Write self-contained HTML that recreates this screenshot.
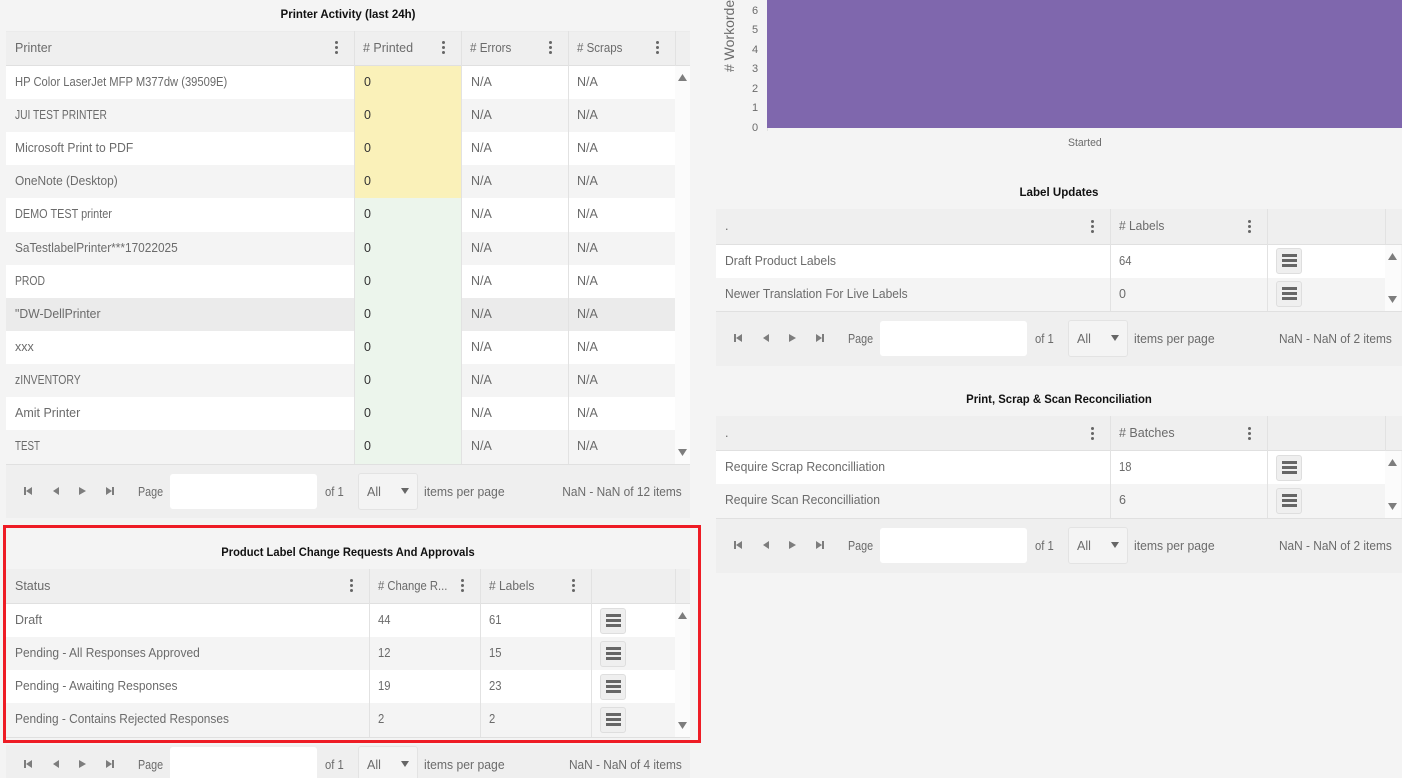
<!DOCTYPE html>
<html><head><meta charset="utf-8"><style>
html,body{margin:0;padding:0;background:#f4f4f4;overflow:hidden}
body{width:1402px;height:778px;font-family:"Liberation Sans",sans-serif;font-size:12.5px;color:#6b6b6b}
#a{position:absolute;left:0;top:0;width:1402px;height:778px;overflow:hidden;background:#f4f4f4}
#a *{position:absolute;box-sizing:border-box}
.t{white-space:nowrap;line-height:16px;height:16px;margin-top:1px;transform-origin:0 0}
.h{font-weight:bold;color:#111;font-size:12px;text-align:center;transform-origin:50% 0}
.d{color:#333}
.r{transform-origin:100% 0;transform:scaleX(.95)}
.pg{transform:scaleX(.86)}
.of{transform:scaleX(.9)}
.ip{transform:scaleX(.975)}
.b{background:#efefef}
.w{background:#fff}
.g{background:#f4f4f4}
.v{width:1px;background:#e2e2e2}
.l{height:1px;background:#e0e0e0}
.s{background:#fbfbfb}
.i{background:#fff;border-radius:3px}
.sel{background:#f4f4f4;border:1px solid #e3e3e3;border-radius:3px}
.btn{width:26px;height:26px;background:#efefef;border:1px solid #dedede;border-radius:3px}
.btn i{left:5px;width:15px;height:3px;background:#666}
.k{width:3.4px;height:3.4px;border-radius:50%;background:#666}
</style></head><body><div id="a">

<div class="t h" style="left:6px;width:684px;top:5px;transform:scaleX(.957)">Printer Activity (last 24h)</div>
<div class="b" style="left:6px;top:31px;width:684px;height:35px"></div>
<div class="w" style="left:6px;top:66px;width:669px;height:33px"></div>
<div class="g" style="left:6px;top:99px;width:669px;height:33px"></div>
<div class="w" style="left:6px;top:132px;width:669px;height:33px"></div>
<div class="g" style="left:6px;top:165px;width:669px;height:33px"></div>
<div class="w" style="left:6px;top:198px;width:669px;height:34px"></div>
<div class="g" style="left:6px;top:232px;width:669px;height:33px"></div>
<div class="w" style="left:6px;top:265px;width:669px;height:33px"></div>
<div style="left:6px;top:298px;width:669px;height:33px;background:#ebebeb"></div>
<div class="w" style="left:6px;top:331px;width:669px;height:33px"></div>
<div class="g" style="left:6px;top:364px;width:669px;height:33px"></div>
<div class="w" style="left:6px;top:397px;width:669px;height:33px"></div>
<div class="g" style="left:6px;top:430px;width:669px;height:34px"></div>
<div style="left:355px;top:66px;width:106px;height:132px;background:#faf1b9"></div>
<div style="left:355px;top:198px;width:106px;height:266px;background:#ecf5ec"></div>
<div class="s" style="left:675px;top:66px;width:15px;height:398px"></div>
<div class="l" style="left:6px;top:65px;width:684px"></div>
<div class="l" style="left:6px;top:31px;width:684px;background:#ebebeb"></div>
<div class="l" style="left:6px;top:464px;width:684px"></div>
<div class="v" style="left:354px;top:31px;height:433px"></div>
<div class="v" style="left:461px;top:31px;height:433px"></div>
<div class="v" style="left:568px;top:31px;height:433px"></div>
<div class="v" style="left:675px;top:31px;height:35px"></div>
<div class="b" style="left:6px;top:465px;width:684px;height:53px"></div>

<div class="t" style="left:15px;top:39px">Printer</div>
<div class="t" style="left:363px;top:39px"># Printed</div>
<div class="t" style="left:470px;top:39px;transform:scaleX(.93)"># Errors</div>
<div class="t" style="left:577px;top:39px;transform:scaleX(.92)"># Scraps</div>
<div class="k" style="left:335px;top:40.5px"></div><div class="k" style="left:335px;top:45.5px"></div><div class="k" style="left:335px;top:50.5px"></div>
<div class="k" style="left:441.5px;top:40.5px"></div><div class="k" style="left:441.5px;top:45.5px"></div><div class="k" style="left:441.5px;top:50.5px"></div>
<div class="k" style="left:548.5px;top:40.5px"></div><div class="k" style="left:548.5px;top:45.5px"></div><div class="k" style="left:548.5px;top:50.5px"></div>
<div class="k" style="left:655.5px;top:40.5px"></div><div class="k" style="left:655.5px;top:45.5px"></div><div class="k" style="left:655.5px;top:50.5px"></div>

<div class="t" style="left:15px;top:73px;transform:scaleX(.895)">HP Color LaserJet MFP M377dw (39509E)</div>
<div class="t" style="left:15px;top:106px;transform:scaleX(.82)">JUI TEST PRINTER</div>
<div class="t" style="left:15px;top:139px;transform:scaleX(.967)">Microsoft Print to PDF</div>
<div class="t" style="left:15px;top:172px;transform:scaleX(.954)">OneNote (Desktop)</div>
<div class="t" style="left:15px;top:205px;transform:scaleX(.87)">DEMO TEST printer</div>
<div class="t" style="left:15px;top:239px;transform:scaleX(.948)">SaTestlabelPrinter***17022025</div>
<div class="t" style="left:15px;top:272px;transform:scaleX(.83)">PROD</div>
<div class="t" style="left:15px;top:305px;transform:scaleX(.977)">"DW-DellPrinter</div>
<div class="t" style="left:15px;top:338px">xxx</div>
<div class="t" style="left:15px;top:371px;transform:scaleX(.835)">zINVENTORY</div>
<div class="t" style="left:15px;top:404px">Amit Printer</div>
<div class="t" style="left:15px;top:437px;transform:scaleX(.78)">TEST</div>

<div class="t d" style="left:364px;top:73px">0</div>
<div class="t d" style="left:364px;top:106px">0</div>
<div class="t d" style="left:364px;top:139px">0</div>
<div class="t d" style="left:364px;top:172px">0</div>
<div class="t d" style="left:364px;top:205px">0</div>
<div class="t d" style="left:364px;top:239px">0</div>
<div class="t d" style="left:364px;top:272px">0</div>
<div class="t d" style="left:364px;top:305px">0</div>
<div class="t d" style="left:364px;top:338px">0</div>
<div class="t d" style="left:364px;top:371px">0</div>
<div class="t d" style="left:364px;top:404px">0</div>
<div class="t d" style="left:364px;top:437px">0</div>

<div class="t" style="left:471px;top:73px">N/A</div><div class="t" style="left:577px;top:73px">N/A</div>
<div class="t" style="left:471px;top:106px">N/A</div><div class="t" style="left:577px;top:106px">N/A</div>
<div class="t" style="left:471px;top:139px">N/A</div><div class="t" style="left:577px;top:139px">N/A</div>
<div class="t" style="left:471px;top:172px">N/A</div><div class="t" style="left:577px;top:172px">N/A</div>
<div class="t" style="left:471px;top:205px">N/A</div><div class="t" style="left:577px;top:205px">N/A</div>
<div class="t" style="left:471px;top:239px">N/A</div><div class="t" style="left:577px;top:239px">N/A</div>
<div class="t" style="left:471px;top:272px">N/A</div><div class="t" style="left:577px;top:272px">N/A</div>
<div class="t" style="left:471px;top:305px">N/A</div><div class="t" style="left:577px;top:305px">N/A</div>
<div class="t" style="left:471px;top:338px">N/A</div><div class="t" style="left:577px;top:338px">N/A</div>
<div class="t" style="left:471px;top:371px">N/A</div><div class="t" style="left:577px;top:371px">N/A</div>
<div class="t" style="left:471px;top:404px">N/A</div><div class="t" style="left:577px;top:404px">N/A</div>
<div class="t" style="left:471px;top:437px">N/A</div><div class="t" style="left:577px;top:437px">N/A</div>

<div class="i" style="left:170px;top:474px;width:147px;height:35px"></div>
<div class="sel" style="left:358px;top:473px;width:60px;height:37px"></div>
<div class="t pg" style="left:138px;top:483px">Page</div>
<div class="t of" style="left:325px;top:483px">of 1</div>
<div class="t" style="left:367px;top:483px">All</div>
<div class="t ip" style="left:424px;top:483px">items per page</div>
<div class="t r" style="right:720px;top:483px">NaN - NaN of 12 items</div>

<!-- Product Label panel -->
<div class="t h" style="left:6px;width:684px;top:543px;transform:scaleX(.93)">Product Label Change Requests And Approvals</div>
<div class="b" style="left:6px;top:569px;width:684px;height:35px"></div>
<div class="w" style="left:6px;top:604px;width:669px;height:33px"></div>
<div class="g" style="left:6px;top:637px;width:669px;height:33px"></div>
<div class="w" style="left:6px;top:670px;width:669px;height:33px"></div>
<div class="g" style="left:6px;top:703px;width:669px;height:34px"></div>
<div class="s" style="left:675px;top:604px;width:15px;height:133px"></div>
<div class="l" style="left:6px;top:603px;width:684px"></div>
<div class="l" style="left:6px;top:737px;width:684px"></div>
<div class="v" style="left:369px;top:569px;height:168px"></div>
<div class="v" style="left:480px;top:569px;height:168px"></div>
<div class="v" style="left:591px;top:569px;height:168px"></div>
<div class="v" style="left:675px;top:569px;height:35px"></div>

<div class="t" style="left:15px;top:577px">Status</div>
<div class="t" style="left:378px;top:577px;transform:scaleX(.9)"># Change R...</div>
<div class="t" style="left:489px;top:577px;transform:scaleX(.96)"># Labels</div>
<div class="k" style="left:349.5px;top:578.5px"></div><div class="k" style="left:349.5px;top:583.5px"></div><div class="k" style="left:349.5px;top:588.5px"></div>
<div class="k" style="left:460.5px;top:578.5px"></div><div class="k" style="left:460.5px;top:583.5px"></div><div class="k" style="left:460.5px;top:588.5px"></div>
<div class="k" style="left:571.5px;top:578.5px"></div><div class="k" style="left:571.5px;top:583.5px"></div><div class="k" style="left:571.5px;top:588.5px"></div>

<div class="t" style="left:15px;top:611px">Draft</div><div class="t of" style="left:378px;top:611px">44</div><div class="t of" style="left:489px;top:611px">61</div>
<div class="t" style="left:15px;top:644px;transform:scaleX(.96)">Pending - All Responses Approved</div><div class="t of" style="left:378px;top:644px">12</div><div class="t of" style="left:489px;top:644px">15</div>
<div class="t" style="left:15px;top:677px;transform:scaleX(.96)">Pending - Awaiting Responses</div><div class="t of" style="left:378px;top:677px">19</div><div class="t of" style="left:489px;top:677px">23</div>
<div class="t" style="left:15px;top:710px;transform:scaleX(.95)">Pending - Contains Rejected Responses</div><div class="t of" style="left:378px;top:710px">2</div><div class="t of" style="left:489px;top:710px">2</div>

<div class="btn" style="left:600px;top:608px"><i style="top:5px"></i><i style="top:10px"></i><i style="top:15px"></i></div>
<div class="btn" style="left:600px;top:641px"><i style="top:5px"></i><i style="top:10px"></i><i style="top:15px"></i></div>
<div class="btn" style="left:600px;top:674px"><i style="top:5px"></i><i style="top:10px"></i><i style="top:15px"></i></div>
<div class="btn" style="left:600px;top:707px"><i style="top:5px"></i><i style="top:10px"></i><i style="top:15px"></i></div>

<div class="b" style="left:6px;top:745px;width:684px;height:33px"></div>
<div class="i" style="left:170px;top:747px;width:147px;height:35px"></div>
<div class="sel" style="left:358px;top:746px;width:60px;height:37px"></div>
<div class="t pg" style="left:138px;top:756px">Page</div>
<div class="t of" style="left:325px;top:756px">of 1</div>
<div class="t" style="left:367px;top:756px">All</div>
<div class="t ip" style="left:424px;top:756px">items per page</div>
<div class="t r" style="right:720px;top:756px">NaN - NaN of 4 items</div>

<div style="left:3px;top:525px;width:698px;height:218px;border:3px solid #ee1c25"></div>

<!-- Chart -->
<div style="left:767px;top:0;width:635px;height:128px;background:#7f67ad"></div>
<div class="v" style="left:767px;top:128px;height:3px"></div>
<div class="t" style="left:729px;top:72px;margin:0;font-size:14px;transform-origin:0 0;transform:rotate(-90deg) translate(0,-8px)"># Workorders</div>
<div class="t" style="left:752px;top:2px;font-size:11px">6</div>
<div class="t" style="left:752px;top:21px;font-size:11px">5</div>
<div class="t" style="left:752px;top:41px;font-size:11px">4</div>
<div class="t" style="left:752px;top:60px;font-size:11px">3</div>
<div class="t" style="left:752px;top:80px;font-size:11px">2</div>
<div class="t" style="left:752px;top:99px;font-size:11px">1</div>
<div class="t" style="left:752px;top:119px;font-size:11px">0</div>
<div class="t" style="left:1068px;top:134px;font-size:11px;transform:scaleX(.95)">Started</div>

<!-- Label Updates -->
<div class="t h" style="left:716px;width:686px;top:183px;transform:scaleX(.963)">Label Updates</div>
<div class="b" style="left:716px;top:209px;width:686px;height:35px"></div>
<div class="w" style="left:716px;top:245px;width:669px;height:33px"></div>
<div class="g" style="left:716px;top:278px;width:669px;height:33px"></div>
<div class="s" style="left:1385px;top:245px;width:16px;height:66px"></div>
<div class="l" style="left:716px;top:244px;width:686px"></div>
<div class="l" style="left:716px;top:311px;width:686px"></div>
<div class="v" style="left:1110px;top:209px;height:102px"></div>
<div class="v" style="left:1267px;top:209px;height:102px"></div>
<div class="v" style="left:1385px;top:209px;height:35px"></div>
<div class="t" style="left:725px;top:217px">.</div>
<div class="t" style="left:1119px;top:217px;transform:scaleX(.96)"># Labels</div>
<div class="k" style="left:1090.5px;top:219.5px"></div><div class="k" style="left:1090.5px;top:224.5px"></div><div class="k" style="left:1090.5px;top:229.5px"></div>
<div class="k" style="left:1247.5px;top:219.5px"></div><div class="k" style="left:1247.5px;top:224.5px"></div><div class="k" style="left:1247.5px;top:229.5px"></div>
<div class="t" style="left:725px;top:252px;transform:scaleX(.974)">Draft Product Labels</div><div class="t of" style="left:1119px;top:252px">64</div>
<div class="t" style="left:725px;top:285px;transform:scaleX(.963)">Newer Translation For Live Labels</div><div class="t" style="left:1119px;top:285px">0</div>
<div class="btn" style="left:1276px;top:248px"><i style="top:5px"></i><i style="top:10px"></i><i style="top:15px"></i></div>
<div class="btn" style="left:1276px;top:281px"><i style="top:5px"></i><i style="top:10px"></i><i style="top:15px"></i></div>
<div class="b" style="left:716px;top:312px;width:686px;height:54px"></div>
<div class="i" style="left:880px;top:321px;width:147px;height:35px"></div>
<div class="sel" style="left:1068px;top:320px;width:60px;height:37px"></div>
<div class="t pg" style="left:848px;top:330px">Page</div>
<div class="t of" style="left:1035px;top:330px">of 1</div>
<div class="t" style="left:1077px;top:330px">All</div>
<div class="t ip" style="left:1134px;top:330px">items per page</div>
<div class="t r" style="right:10px;top:330px">NaN - NaN of 2 items</div>

<!-- Reconciliation -->
<div class="t h" style="left:716px;width:686px;top:390px;transform:scaleX(.944)">Print, Scrap &amp; Scan Reconciliation</div>
<div class="b" style="left:716px;top:416px;width:686px;height:35px"></div>
<div class="w" style="left:716px;top:451px;width:669px;height:33px"></div>
<div class="g" style="left:716px;top:484px;width:669px;height:34px"></div>
<div class="s" style="left:1385px;top:451px;width:16px;height:67px"></div>
<div class="l" style="left:716px;top:450px;width:686px"></div>
<div class="l" style="left:716px;top:518px;width:686px"></div>
<div class="v" style="left:1110px;top:416px;height:102px"></div>
<div class="v" style="left:1267px;top:416px;height:102px"></div>
<div class="v" style="left:1385px;top:416px;height:35px"></div>
<div class="t" style="left:725px;top:424px">.</div>
<div class="t" style="left:1119px;top:424px"># Batches</div>
<div class="k" style="left:1090.5px;top:426.5px"></div><div class="k" style="left:1090.5px;top:431.5px"></div><div class="k" style="left:1090.5px;top:436.5px"></div>
<div class="k" style="left:1247.5px;top:426.5px"></div><div class="k" style="left:1247.5px;top:431.5px"></div><div class="k" style="left:1247.5px;top:436.5px"></div>
<div class="t" style="left:725px;top:458px;transform:scaleX(.976)">Require Scrap Reconcilliation</div><div class="t of" style="left:1119px;top:458px">18</div>
<div class="t" style="left:725px;top:491px;transform:scaleX(.97)">Require Scan Reconcilliation</div><div class="t" style="left:1119px;top:491px">6</div>
<div class="btn" style="left:1276px;top:455px"><i style="top:5px"></i><i style="top:10px"></i><i style="top:15px"></i></div>
<div class="btn" style="left:1276px;top:488px"><i style="top:5px"></i><i style="top:10px"></i><i style="top:15px"></i></div>
<div class="b" style="left:716px;top:519px;width:686px;height:54px"></div>
<div class="i" style="left:880px;top:528px;width:147px;height:35px"></div>
<div class="sel" style="left:1068px;top:527px;width:60px;height:37px"></div>
<div class="t pg" style="left:848px;top:537px">Page</div>
<div class="t of" style="left:1035px;top:537px">of 1</div>
<div class="t" style="left:1077px;top:537px">All</div>
<div class="t ip" style="left:1134px;top:537px">items per page</div>
<div class="t r" style="right:10px;top:537px">NaN - NaN of 2 items</div>

<svg style="left:0;top:0" width="1402" height="778" fill="#7d7d7d">
<path d="M678 81l4.500-7 4.500 7zM678 449l4.500 7 4.500-7z"/>
<path d="M678 619l4.500-7 4.500 7zM678 722l4.500 7 4.500-7z"/>
<path d="M1388 260l4.500-7 4.500 7zM1388 296l4.500 7 4.500-7z"/>
<path d="M1388 466l4.500-7 4.500 7zM1388 503l4.500 7 4.500-7z"/>
<path d="M24 487h2v8h-2zM32 487v8l-6-4zM59 487v8l-6-4zM79 487v8l7-4zM106 487v8l6-4zM112 487h2v8h-2z"/>
<path d="M24 760h2v8h-2zM32 760v8l-6-4zM59 760v8l-6-4zM79 760v8l7-4zM106 760v8l6-4zM112 760h2v8h-2z"/>
<path d="M734 334h2v8h-2zM742 334v8l-6-4zM769 334v8l-6-4zM789 334v8l7-4zM816 334v8l6-4zM822 334h2v8h-2z"/>
<path d="M734 541h2v8h-2zM742 541v8l-6-4zM769 541v8l-6-4zM789 541v8l7-4zM816 541v8l6-4zM822 541h2v8h-2z"/>
<g fill="#666"><path d="M401 488h8l-4 6z"/><path d="M401 761h8l-4 6z"/><path d="M1111 335h8l-4 6z"/><path d="M1111 542h8l-4 6z"/></g>
</svg>
</div></body></html>
